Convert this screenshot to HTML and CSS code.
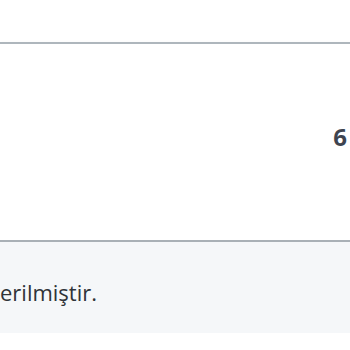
FILE: index.html
```html
<!DOCTYPE html>
<html>
  <head>
    <title>Panel</title>
    <link rel="stylesheet" href="styles.css">
  </head>
  <body>
    <div class="top-space"></div>
    <div class="panel">
      <div class="panel-body">
        <span class="count">6</span>
      </div>
      <div class="panel-footer">
        <p class="note">erilmiştir.</p>
      </div>
    </div>
  </body>
</html>
```

FILE: styles.css
```css
body
{
  font-family: "Open Sans", Lato, sans-serif;
  margin: 0;
  background-color: #fff;
  overflow: hidden;
}

.top-space
{
  height: 42px;
}

.panel
{
  border-top: 2px solid #aeb6bc;
  box-shadow: 0 3px 6px rgba(0, 0, 0, 0.08);
}

.panel-body
{
  height: 196px;
  display: flex;
  align-items: center;
  justify-content: flex-end;
  padding-right: 3px;
  border-bottom: 2px solid #a9b0b6;
}

.count
{
  font-size: 24px;
  font-weight: bold;
  color: #3e4450;
  margin-top: -12px;
}

.panel-footer
{
  background-color: #f5f7f9;
  height: 91px;
  display: flex;
  align-items: center;
}

.note
{
  margin: 0;
  font-size: 22px;
  color: #2f3338;
  margin-top: 8px;
}
```
